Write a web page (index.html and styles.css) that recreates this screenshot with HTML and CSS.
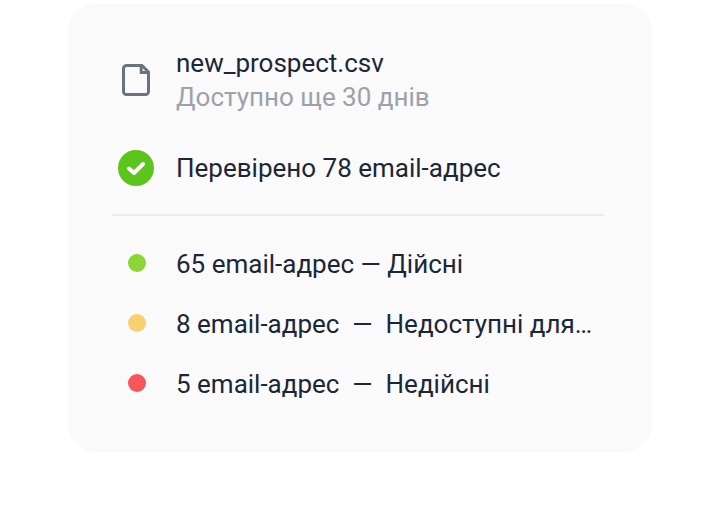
FILE: index.html
```html
<!DOCTYPE html>
<html lang="uk">
<head>
<meta charset="utf-8">
<meta name="viewport" content="width=device-width, initial-scale=1">
<title>new_prospect.csv</title>
<link rel="stylesheet" href="styles.css">
</head>
<body>
<main class="card">
  <header class="row file">
    <span class="mark">
      <svg width="32" height="36" viewBox="0 0 32 36" fill="none" stroke="#6a7380" stroke-width="3" stroke-linejoin="round" aria-hidden="true">
        <path d="M6.500 3.500H22L28.500 10V29.500A3 3 0 0 1 25.500 32.500H6.500A3 3 0 0 1 3.500 29.500V6.500A3 3 0 0 1 6.500 3.500Z"/>
        <path d="M21.200 4V10.500H28" stroke-linejoin="miter"/>
      </svg>
    </span>
    <div class="text">
      <h1 class="name">new_prospect.csv</h1>
      <p class="note">Доступно ще 30 днів</p>
    </div>
  </header>
  <div class="row summary">
    <span class="mark">
      <svg width="36" height="36" viewBox="0 0 36 36" fill="none" aria-hidden="true">
        <circle cx="18" cy="18" r="18" fill="#5bc51b"/>
        <path d="M11 18.500L16 23L25 14" stroke="#fff" stroke-width="4" stroke-linecap="round" stroke-linejoin="round"/>
      </svg>
    </span>
    <p class="text">Перевірено 78 email-адрес</p>
  </div>
  <ul class="results">
    <li class="row"><span class="mark"><i class="dot valid"></i></span><span class="text">65 email-адрес — Дійсні</span></li>
    <li class="row"><span class="mark"><i class="dot risky"></i></span><span class="text">8 email-адрес&nbsp; —&nbsp; Недоступні для…</span></li>
    <li class="row"><span class="mark"><i class="dot invalid"></i></span><span class="text">5 email-адрес&nbsp; —&nbsp; Недійсні</span></li>
  </ul>
</main>
</body>
</html>
```
FILE: styles.css
```css
* {
  box-sizing: border-box;
}

body {
  margin: 0;
  padding: 4px 68px;
  background: #fff;
  color: #1b2738;
  font: 26px/34px Roboto, "Noto Sans", sans-serif;
}

h1, p, ul {
  margin: 0;
  padding: 0;
  font: inherit;
}

.card {
  max-width: 584px;
  margin: 0 auto;
  padding: 42px 48px 50px 44px;
  border-radius: 28px;
  background: #fafafa;
}

.row {
  display: flex;
  align-items: center;
  gap: 16px;
}

.mark {
  display: flex;
  flex: 0 0 48px;
  justify-content: center;
}

.text {
  flex: 1;
  min-width: 0;
  overflow: hidden;
  text-overflow: ellipsis;
  white-space: nowrap;
}

.note {
  color: #9ba2a9;
}

.summary {
  padding: 36px 0 28px;
  border-bottom: 2px solid #e9eaea;
}

.results {
  display: grid;
  grid-template-columns: minmax(0, 1fr);
  gap: 26px;
  padding: 31px 0 1px;
  list-style: none;
}

.dot {
  width: 18px;
  height: 18px;
  margin: 0 0 2px 2px;
  border-radius: 50%;
}

.valid {
  background: #8dd535;
}

.risky {
  background: #f7d070;
}

.invalid {
  background: #f55758;
}
```
